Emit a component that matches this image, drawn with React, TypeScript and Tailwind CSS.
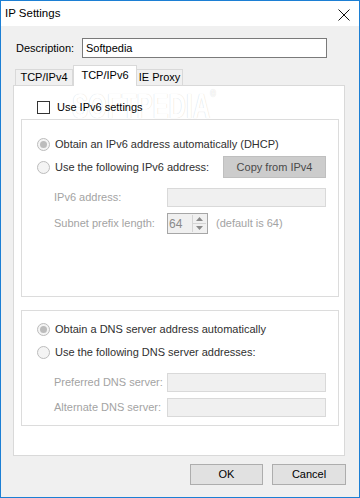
import React from 'react';

const font = "font-['Liberation_Sans',Arial,sans-serif]";

function Radio({ checked }: { checked?: boolean }) {
  return (
    <span className="w-[13px] h-[13px] rounded-full border border-[#bcbcbc] bg-[#f4f4f4] flex items-center justify-center shrink-0">
      {checked && <span className="w-[7px] h-[7px] rounded-full bg-[#bcbcbc]" />}
    </span>
  );
}

function Field({ w = 'w-[159px]', h = 'h-[19px]' }: { w?: string; h?: string }) {
  return <div className={`${w} ${h} bg-[#f0f0f0] border border-[#d9d9d9]`} />;
}

export default function App() {
  return (
    <div className={`w-[360px] h-[498px] border border-[#1c7fd4] bg-[#f0f0f0] flex flex-col text-[11px] leading-none text-black whitespace-nowrap ${font}`}>
      {/* title bar */}
      <div className="h-[25px] bg-white flex items-center justify-between pl-[4px] pr-[9px]">
        <span className="text-[11.5px]">IP Settings</span>
        <svg width="12" height="12" viewBox="0 0 12 12" className="mt-[2px]">
          <path d="M0.5 0.5 L11.5 11.5 M11.5 0.5 L0.5 11.5" stroke="#111" strokeWidth="1" />
        </svg>
      </div>

      <div className="flex-1 flex flex-col px-[12px]">
        {/* description */}
        <div className="mt-[12px] h-[20px] flex items-center">
          <span className="w-[69px] pl-[3px]">Description:</span>
          <div className="w-[245px] h-[20px] bg-white border border-[#7a7a7a] flex items-center pl-[3px]">
            Softpedia
          </div>
        </div>

        {/* tabs */}
        <div className="mt-[7px] h-[20px] flex items-end relative z-10">
          <div className="ml-[2px] w-[58px] h-[16px] border border-b-0 border-[#d9d9d9] bg-[#f0f0f0] flex items-center justify-center">
            TCP/IPv4
          </div>
          <div className="w-[64px] h-[21px] -mb-[1px] border border-b-0 border-[#d9d9d9] bg-white flex items-center justify-center pb-[1px]">
            TCP/IPv6
          </div>
          <div className="w-[46px] h-[16px] border border-b-0 border-l-0 border-[#d9d9d9] bg-[#f0f0f0] flex items-center justify-center">
            IE Proxy
          </div>
        </div>

        {/* panel */}
        <div className="w-[332px] h-[371px] bg-white border border-[#d9d9d9] flex flex-col relative">
          {/* watermark */}
          <div className="absolute left-[58px] top-[2px] origin-left scale-x-[0.69] text-[35px] font-bold text-white [text-shadow:0_0_1px_#cfcfcf] select-none pointer-events-none">
            SOFTPEDIA<span className="text-[11px] align-top">®</span>
          </div>

          <div className="mt-[15px] ml-[23px] flex items-center gap-[7px] relative">
            <span className="w-[13px] h-[13px] border border-[#333333] bg-white shrink-0" />
            <span>Use IPv6 settings</span>
          </div>

          {/* group 1 */}
          <div className="mt-[5px] ml-[7px] w-[318px] h-[178px] border border-[#dcdcdc] flex flex-col pl-[15px] relative">
            <div className="mt-[14px] h-[20px] flex items-center gap-[5px] text-[#303030]">
              <Radio checked />
              <span>Obtain an IPv6 address automatically (DHCP)</span>
            </div>
            <div className="mt-[2px] h-[22px] flex items-center">
              <Radio />
              <span className="ml-[5px] text-[#303030]">Use the following IPv6 address:</span>
              <div className="ml-auto mr-[12px] w-[103px] h-[22px] bg-[#cccccc] border border-[#bfbfbf] flex items-center justify-center text-[#4a4a4a]">
                Copy from IPv4
              </div>
            </div>
            <div className="mt-[10px] h-[19px] flex items-center pl-[17px] text-[#a3a3a3]">
              <span className="w-[113px]">IPv6 address:</span>
              <Field />
            </div>
            <div className="mt-[6px] h-[21px] flex items-center pl-[17px] text-[#a3a3a3]">
              <span className="w-[113px]">Subnet prefix length:</span>
              <div className="w-[41px] h-[21px] border border-[#a6a6a6] bg-[#f0f0f0] flex">
                <span className="flex-1 flex items-center pl-[1px] text-[#8a8a8a] text-[12px]">64</span>
                <div className="w-[14px] mr-[1px] my-[1px] flex flex-col border-l border-[#d4d4d4]">
                  <div className="flex-1 flex items-center justify-center border-b border-[#d4d4d4]">
                    <svg width="7" height="4" viewBox="0 0 7 4"><path d="M0 4 L3.5 0 L7 4 Z" fill="#8a8a8a" /></svg>
                  </div>
                  <div className="flex-1 flex items-center justify-center">
                    <svg width="7" height="4" viewBox="0 0 7 4"><path d="M0 0 L3.5 4 L7 0 Z" fill="#8a8a8a" /></svg>
                  </div>
                </div>
              </div>
              <span className="ml-[8px]">(default is 64)</span>
            </div>
          </div>

          {/* group 2 */}
          <div className="mt-[13px] ml-[7px] w-[318px] h-[116px] border border-[#dcdcdc] flex flex-col pl-[15px]">
            <div className="mt-[8px] h-[20px] flex items-center gap-[5px] text-[#303030]">
              <Radio checked />
              <span>Obtain a DNS server address automatically</span>
            </div>
            <div className="mt-[3px] h-[20px] flex items-center gap-[5px] text-[#303030]">
              <Radio />
              <span>Use the following DNS server addresses:</span>
            </div>
            <div className="mt-[11px] h-[19px] flex items-center pl-[17px] text-[#a3a3a3]">
              <span className="w-[113px]">Preferred DNS server:</span>
              <Field />
            </div>
            <div className="mt-[6px] h-[19px] flex items-center pl-[17px] text-[#a3a3a3]">
              <span className="w-[113px]">Alternate DNS server:</span>
              <Field />
            </div>
          </div>
        </div>

        {/* buttons */}
        <div className="mt-[8px] flex justify-end gap-[9px] pr-[1px]">
          <button className="w-[73px] h-[21px] bg-[#e1e1e1] border border-[#adadad] flex items-center justify-center">OK</button>
          <button className="w-[74px] h-[21px] bg-[#e1e1e1] border border-[#adadad] flex items-center justify-center">Cancel</button>
        </div>
      </div>
    </div>
  );
}
